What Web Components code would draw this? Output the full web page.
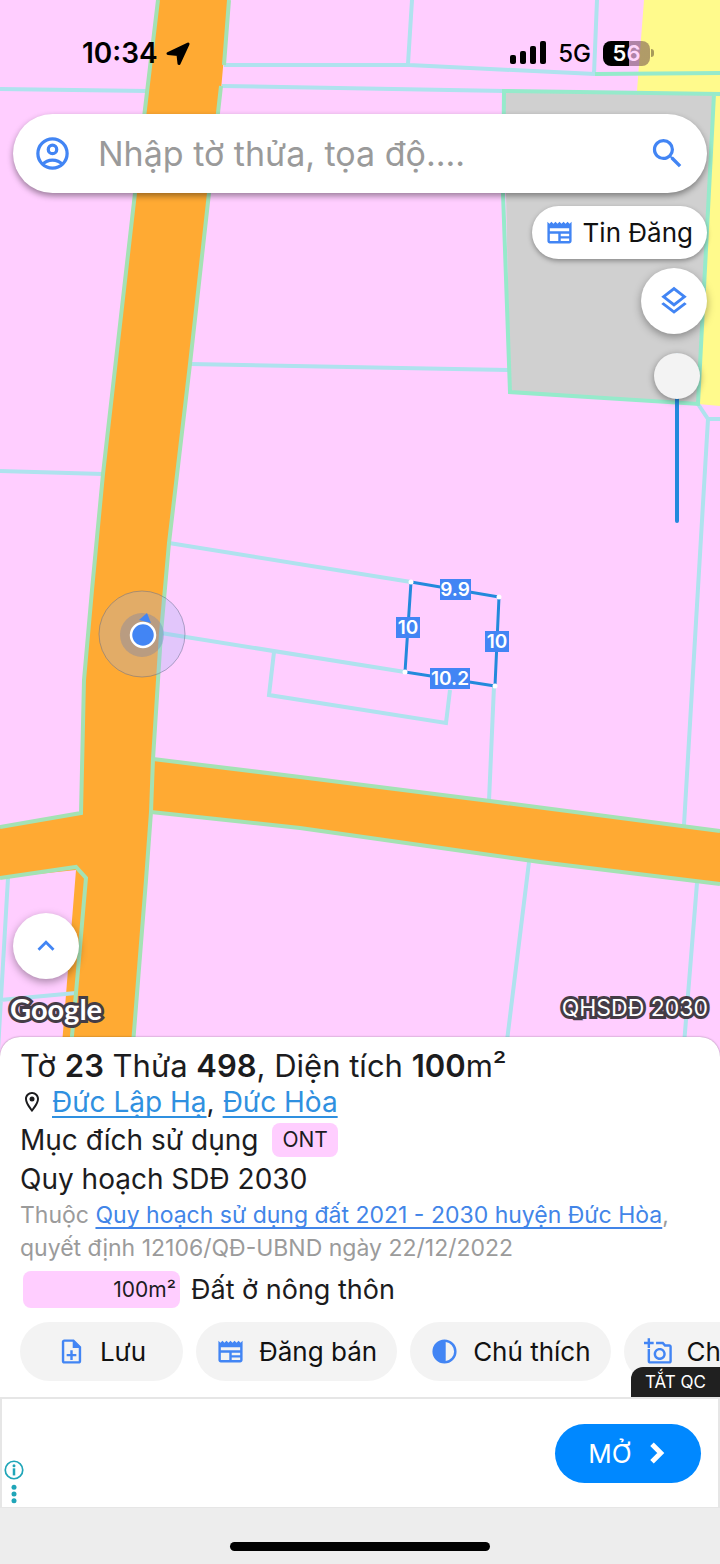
<!DOCTYPE html>
<html lang="vi">
<head>
<meta charset="utf-8">
<meta name="viewport" content="width=device-width, initial-scale=1">
<title>Bản đồ quy hoạch</title>
<style>
    body {
        margin: 0;
        font-family: Inter, "Liberation Sans", sans-serif;
        color: #1c1c1e;
        background: #ededed;
    }
</style>
</head>
<body>
<land-app></land-app>

<script>
const icons = {
    account: '<g fill="none" stroke="currentColor" stroke-width="2"><circle cx="12" cy="12" r="9"/><circle cx="12" cy="9.500" r="2.600"/><path d="M6 18.600C9 15.200 15 15.200 18 18.600"/></g>',
    search: '<path d="M15.500 14h-.79l-.28-.27A6.470 6.470 0 0 0 16 9.500 6.500 6.500 0 1 0 9.500 16c1.610 0 3.090-.59 4.230-1.570l.27.28v.79l5 4.990L20.490 19l-4.990-5zm-6 0C7.010 14 5 11.990 5 9.500S7.010 5 9.500 5 14 7.010 14 9.500 11.990 14 9.500 14z"/>',
    news: '<path fill-rule="evenodd" d="M22 3l-1.670 1.670L18.670 3 17 4.670 15.330 3l-1.660 1.670L12 3l-1.670 1.670L8.670 3 7 4.670 5.330 3 3.670 4.670 2 3v16c0 1.100.9 2 2 2h16c1.100 0 2-.9 2-2V3zM11 19H4v-6h7v6zm9 0h-7v-2h7v2zm0-4h-7v-2h7v2zm0-4H4V8.500h16V11z"/>',
    layers: '<path d="M11.990 18.540l-7.370-5.730L3 14.070l9 7 9-7-1.630-1.270-7.380 5.740zM12 16l7.360-5.730L21 9l-9-7-9 7 1.630 1.270L12 16zm0-11.470L17.740 9 12 13.470 6.260 9 12 4.530z"/>',
    up: '<path d="M12 8l-6 6 1.410 1.410L12 10.830l4.590 4.580L18 14z"/>',
    pin: '<path d="M12 2C8.130 2 5 5.130 5 9c0 5.250 7 13 7 13s7-7.750 7-13c0-3.870-3.130-7-7-7zM7 9c0-2.760 2.240-5 5-5s5 2.240 5 5c0 2.880-2.880 7.190-5 9.880C9.920 16.210 7 11.850 7 9z"/><circle cx="12" cy="9" r="2.500"/>',
    save: '<path d="M13 11h-2v3H8v2h3v3h2v-3h3v-2h-3zm1-9H6c-1.100 0-2 .9-2 2v16c0 1.100.89 2 1.990 2H18c1.100 0 2-.9 2-2V8l-6-6zm4 18H6V4h7v5h5v11z"/>',
    contrast: '<path d="M12 2a10 10 0 1 0 0 20 10 10 0 0 0 0-20zm1 2.070a8 8 0 0 1 0 15.860V4.070z"/>',
    camera: '<path d="M21 6h-3.170L16 4h-6v2h5.120l1.830 2H21v12H5v-10H3v10c0 1.100.9 2 2 2h16c1.100 0 2-.9 2-2V8c0-1.100-.9-2-2-2zM8 14c0 2.760 2.240 5 5 5s5-2.240 5-5-2.240-5-5-5-5 2.240-5 5zm5-3c1.650 0 3 1.350 3 3s-1.350 3-3 3-3-1.350-3-3 1.350-3 3-3zM5 6h3V4H5V1H3v3H0v2h3v3h2z"/>',
    next: '<path d="M8 5l7 7-7 7" fill="none" stroke="currentColor" stroke-width="4"/>',
    info: '<circle cx="12" cy="12" r="10.500" fill="none" stroke="currentColor" stroke-width="2"/><path d="M10.500 10h3v8.500h-3z"/><circle cx="12" cy="6.800" r="1.800"/>',
    more: '<circle cx="12" cy="4" r="3"/><circle cx="12" cy="12" r="3"/><circle cx="12" cy="20" r="3"/>'
};

class UiIcon extends HTMLElement {
    constructor() {
        super();
        this.attachShadow({ mode: 'open' });
        this.shadowRoot.innerHTML = `
            <style>
                :host { display: inline-block; width: 28px; height: 28px; flex: none; color: #4285f4; }
                svg { display: block; width: 100%; height: 100%; fill: currentColor; }
            </style>
            <svg viewBox="0 0 24 24" aria-hidden="true">${icons[this.getAttribute('name')] || ''}</svg>
        `;
    }
}

class StatusBar extends HTMLElement {
    constructor() {
        super();
        this.attachShadow({ mode: 'open' });
        this.shadowRoot.innerHTML = `
            <style>
                :host {
                    display: flex;
                    justify-content: space-between;
                    align-items: center;
                    height: 106px;
                    margin-bottom: 8px;
                    padding: 0 70px 0 82px;
                    color: #000;
                }
                div { display: flex; align-items: center; }
                .time { font-size: 28px; font-weight: 600; gap: 8px; }
                .signal { gap: 12px; font-size: 24px; font-weight: 500; }
                .battery {
                    position: relative;
                    justify-content: center;
                    width: 47px;
                    height: 25px;
                    border-radius: 8px;
                    background: linear-gradient(to right, #000 56%, rgba(80, 40, 60, .45) 56%);
                    color: #fff;
                    font-size: 22px;
                    font-weight: 600;
                }
                .battery::after {
                    content: "";
                    position: absolute;
                    left: 48px;
                    width: 3px;
                    height: 8px;
                    border-radius: 0 3px 3px 0;
                    background: rgba(80, 60, 40, .5);
                }
                .battery span { color: #ffd6fb; }
            </style>
            <div class="time">10:34
                <svg width="24" height="24" viewBox="0 0 24 24"><path d="M22 3L13 22.500 12 13.500 2 12.500Z" stroke="#000" stroke-width="3" stroke-linejoin="round"/></svg>
            </div>
            <div class="signal">
                <svg width="36" height="24" viewBox="0 0 36 24"><rect y="14" width="6" height="9" rx="2"/><rect x="10" y="10" width="6" height="13" rx="2"/><rect x="20" y="5" width="6" height="18" rx="2"/><rect x="30" width="6" height="23" rx="2"/></svg>
                5G
                <div class="battery">5<span>6</span></div>
            </div>
        `;
    }
}

class SearchBar extends HTMLElement {
    constructor() {
        super();
        this.attachShadow({ mode: 'open' });
        this.shadowRoot.innerHTML = `
            <style>
                :host { display: block; margin: 0 13px; }
                form {
                    display: flex;
                    align-items: center;
                    height: 79px;
                    padding: 0 20px;
                    border-radius: 40px;
                    background: #fff;
                    box-shadow: 0 3px 6px rgba(0, 0, 0, .4);
                }
                button { display: flex; padding: 0; border: none; background: none; }
                ui-icon { width: 39px; height: 39px; }
                input {
                    flex: 1;
                    min-width: 0;
                    margin: 0 26px;
                    padding: 0;
                    border: none;
                    outline: none;
                    background: none;
                    font: 34px Inter, "Liberation Sans", sans-serif;
                }
                input::placeholder { color: #9a9a9a; opacity: 1; }
            </style>
            <form>
                <button type="button" aria-label="Tài khoản"><ui-icon name="account"></ui-icon></button>
                <input type="text" aria-label="Tìm kiếm" placeholder="Nhập tờ thửa, tọa độ....">
                <button type="button" aria-label="Tìm"><ui-icon name="search"></ui-icon></button>
            </form>
        `;
    }
}

class RoundButton extends HTMLElement {
    constructor() {
        super();
        this.attachShadow({ mode: 'open' });
        this.shadowRoot.innerHTML = `
            <style>
                :host { display: block; }
                button {
                    display: flex;
                    align-items: center;
                    justify-content: center;
                    width: 66px;
                    height: 66px;
                    padding: 0;
                    border: none;
                    border-radius: 50%;
                    background: #fff;
                    box-shadow: 0 3px 8px rgba(0, 0, 0, .35);
                }
                ui-icon { width: 34px; height: 34px; }
            </style>
            <button type="button" aria-label="${this.getAttribute('label')}">
                <ui-icon name="${this.getAttribute('icon')}"></ui-icon>
            </button>
        `;
    }
}

class PillButton extends HTMLElement {
    constructor() {
        super();
        this.attachShadow({ mode: 'open' });
        this.shadowRoot.innerHTML = `
            <style>
                :host { display: block; flex: none; }
                button {
                    display: flex;
                    align-items: center;
                    justify-content: center;
                    gap: 14px;
                    min-width: 163px;
                    height: 59px;
                    padding: 0 20px;
                    border: none;
                    border-radius: 30px;
                    background: #f3f3f3;
                    color: #111;
                    font: 26px Inter, "Liberation Sans", sans-serif;
                    white-space: nowrap;
                }
                :host([raised]) button {
                    gap: 9px;
                    height: 53px;
                    padding: 0 14px 0 13px;
                    background: #fff;
                    box-shadow: 0 2px 5px rgba(0, 0, 0, .35);
                }
                ui-icon { width: 29px; height: 29px; }
            </style>
            <button type="button"><ui-icon name="${this.getAttribute('icon')}"></ui-icon><slot></slot></button>
        `;
    }
}

class ParcelMap extends HTMLElement {
    constructor() {
        super();
        this.attachShadow({ mode: 'open' });
        this.shadowRoot.innerHTML = `
            <style>
                :host { display: block; overflow: hidden; background: #ffceff; }
                svg { display: block; width: 100%; height: 100%; }
                .road { fill: #ffaa33; }
                .lines { fill: none; stroke: #afe2ee; stroke-width: 4; }
                .edges { fill: none; stroke: #a4e2b4; stroke-width: 4; }
                .parcel { fill: none; stroke: #2389dc; stroke-width: 3; }
                .tags rect { fill: #4285f4; }
                .tags text { fill: #fff; font-size: 19px; font-weight: 600; text-anchor: middle; }
            </style>
            <svg viewBox="0 0 720 1057" preserveAspectRatio="xMidYMin slice">
                <path fill="#fffa8c" d="M644 0H720V406L698 404 714 94 637 91z"/>
                <path fill="#d0d0d0" d="M504 92L714 94 698 405 510 392z"/>

                <path class="road" d="M158 0H229L221 90 209 193 190 364 169 543 161 633 153 759 300 777 490 801 720 831V884L540 862 300 828 151 812 146 880 132 1057H61L76 870 0 878V826L81 813 84 680 92 590 103 474 135 193z"/>

                <g class="lines">
                    <path d="M0 89L147 91M224 65H409L595 74M412 0L408 64M597 0L594 74M222 86L505 91"/>
                    <path d="M190 364L508 370M0 471L103 474M169 543L411 582M161 633L405 672"/>
                    <path d="M274 652L269 695 446 723 450 690M494 686L489 801"/>
                    <path d="M698 404L708 419H720M708 419L684 825"/>
                    <path d="M529 862L505 1057M697 883L683 1057M8 878L-2 1050M0 1000L76 993"/>
                </g>
                <g class="edges">
                    <path d="M158 0L135 193 103 474 92 590 84 680 81 813 0 827"/>
                    <path d="M229 0L224 65M221 86L209 193 190 364 169 543 161 633 153 759 151 812 146 880 132 1057"/>
                    <path d="M153 759L300 777 490 801 720 831M151 812L300 828 540 862 720 884"/>
                    <path d="M0 878L76 867 86 878 76 993 70 1057"/>
                    <path d="M595 74L720 73M720 94L504 91 503 193 510 392 698 404 714 94" stroke="#96eacb"/>
                </g>

                <path class="parcel" d="M411 582L499 597 495 686 405 672z"/>
                <g fill="#fff"><circle cx="411" cy="582" r="2.500"/><circle cx="499" cy="597" r="2.500"/><circle cx="495" cy="686" r="2.500"/><circle cx="405" cy="672" r="2.500"/></g>
                <g class="tags">
                    <rect x="440" y="579" width="31" height="21"/><text x="455" y="596">9.9</text>
                    <rect x="396" y="617" width="24" height="21"/><text x="408" y="634">10</text>
                    <rect x="485" y="631" width="24" height="21"/><text x="497" y="648">10</text>
                    <rect x="430" y="668" width="40" height="21"/><text x="450" y="685">10.2</text>
                </g>

                <circle cx="142" cy="634" r="43" fill="rgba(150,180,240,.28)" stroke="rgba(100,110,140,.5)"/>
                <circle cx="142" cy="635" r="22" fill="rgba(90,120,190,.3)"/>
                <path fill="#4285f4" d="M147 613L151 623 139 620z"/>
                <circle cx="143" cy="635" r="12" fill="#4285f4" stroke="#fff" stroke-width="2.500"/>
            </svg>
        `;
    }
}

class MapScreen extends HTMLElement {
    constructor() {
        super();
        this.attachShadow({ mode: 'open' });
        this.shadowRoot.innerHTML = `
            <style>
                :host { display: grid; min-height: 1057px; }
                parcel-map, .overlay { grid-area: 1 / 1; min-width: 0; }
                .overlay { position: relative; display: flex; flex-direction: column; }
                .tools {
                    display: flex;
                    flex-direction: column;
                    align-items: flex-end;
                    gap: 9px;
                    padding: 13px 13px 0;
                }
                input {
                    appearance: none;
                    writing-mode: vertical-lr;
                    width: 46px;
                    height: 170px;
                    margin: 10px 7px 0 0;
                    background: none;
                }
                input::-webkit-slider-runnable-track {
                    width: 4px;
                    background: #2389dc;
                    border-radius: 2px;
                }
                input::-webkit-slider-thumb {
                    appearance: none;
                    width: 46px;
                    height: 46px;
                    margin-left: -21px;
                    border-radius: 50%;
                    background: #f3f3f3;
                    box-shadow: 0 2px 7px rgba(0, 0, 0, .4);
                }
                .bottom { margin-top: auto; padding: 0 12px 33px 13px; }
                .labels {
                    display: flex;
                    justify-content: space-between;
                    align-items: center;
                    height: 32px;
                    margin-top: 13px;
                    color: #fff;
                    font-size: 23px;
                    -webkit-text-stroke: 6px #443c46;
                    paint-order: stroke fill;
                }
                .google { margin-left: -3px; font: 700 29px Lato, sans-serif; }
            </style>
            <parcel-map></parcel-map>
            <div class="overlay">
                <status-bar></status-bar>
                <search-bar></search-bar>
                <div class="tools">
                    <pill-button icon="news" raised>Tin Đăng</pill-button>
                    <round-button icon="layers" label="Lớp bản đồ"></round-button>
                    <input type="range" min="0" max="100" value="0" aria-label="Độ mờ">
                </div>
                <div class="bottom">
                    <round-button icon="up" label="Mở rộng"></round-button>
                    <div class="labels"><span class="google">Google</span><span>QHSDĐ 2030</span></div>
                </div>
            </div>
        `;
    }
}

class ParcelSheet extends HTMLElement {
    constructor() {
        super();
        this.attachShadow({ mode: 'open' });
        this.shadowRoot.innerHTML = `
            <style>
                :host {
                    display: block;
                    position: relative;
                    margin-top: -20px;
                    padding: 10px 0 16px 20px;
                    border-radius: 20px 20px 0 0;
                    background: #fff;
                    box-shadow: 0 0 2px rgba(0, 0, 0, .4);
                    overflow: hidden;
                }
                h1, p { margin: 0; font-size: 28px; font-weight: 400; }
                h1 { font-size: 31px; line-height: 38px; }
                b { font-weight: 600; }
                a { color: #2f90e0; text-underline-offset: 4px; text-decoration-thickness: 2px; text-decoration-skip-ink: none; }
                .place { display: flex; align-items: center; line-height: 34px; }
                .place ui-icon { width: 24px; height: 24px; margin-right: 8px; color: #1c1c1e; }
                .place span { margin-right: 8px; }
                .purpose { display: flex; align-items: center; gap: 14px; height: 42px; }
                .tag {
                    padding: 0 10px;
                    border-radius: 8px;
                    background: #ffceff;
                    font-size: 21px;
                    line-height: 34px;
                }
                .plan { line-height: 36px; }
                .note { margin: 2px 20px 6px 0; color: #9b9b9b; font-size: 23px; line-height: 33px; }
                .note a { color: #4285e8; }
                .use { display: flex; align-items: center; gap: 11px; font-size: 27px; }
                .area {
                    width: 153px;
                    margin-left: 3px;
                    padding-right: 4px;
                    border-radius: 8px;
                    background: #ffceff;
                    font-size: 21px;
                    line-height: 37px;
                    text-align: right;
                }
                .actions { display: flex; gap: 13px; margin-top: 14px; overflow: hidden; }
            </style>
            <h1>Tờ <b>23</b> Thửa <b>498</b>, Diện tích <b>100</b>m²</h1>
            <p class="place"><ui-icon name="pin"></ui-icon><a href="#">Đức Lập Hạ</a><span>,</span><a href="#">Đức Hòa</a></p>
            <p class="purpose">Mục đích sử dụng <span class="tag">ONT</span></p>
            <p class="plan">Quy hoạch SDĐ 2030</p>
            <p class="note">Thuộc <a href="#">Quy hoạch sử dụng đất 2021 - 2030 huyện Đức Hòa</a><span>,</span> <span>quyết định 12106/QĐ-UBND ngày 22/12/2022</span></p>
            <div class="use"><span class="area">100m²</span>Đất ở nông thôn</div>
            <div class="actions">
                <pill-button icon="save">Lưu</pill-button>
                <pill-button icon="news">Đăng bán</pill-button>
                <pill-button icon="contrast">Chú thích</pill-button>
                <pill-button icon="camera">Chụp ảnh</pill-button>
            </div>
        `;
        // the second half of the note always starts its own line
        this.shadowRoot.querySelector('.note span:last-child').style.display = 'block';
    }
}

class AdBanner extends HTMLElement {
    constructor() {
        super();
        this.attachShadow({ mode: 'open' });
        this.shadowRoot.innerHTML = `
            <style>
                :host {
                    display: flex;
                    justify-content: space-between;
                    align-items: center;
                    position: relative;
                    box-sizing: border-box;
                    height: 111px;
                    padding: 0 17px 0 2px;
                    border: 2px solid #e6e6e6;
                    border-bottom-width: 1px;
                    background: #fff;
                }
                button { border: none; font: 17px Inter, "Liberation Sans", sans-serif; color: #fff; }
                .off {
                    position: absolute;
                    right: -2px;
                    bottom: 100%;
                    height: 30px;
                    margin-bottom: 2px;
                    padding: 0 14px;
                    border-radius: 12px 0 0 0;
                    background: #202020;
                }
                .open {
                    display: flex;
                    align-items: center;
                    justify-content: center;
                    gap: 10px;
                    width: 146px;
                    height: 59px;
                    border-radius: 30px;
                    background: #0088ff;
                    font-size: 26px;
                }
                .open ui-icon { width: 30px; height: 30px; margin-right: -4px; color: #fff; }
                .marks { display: flex; flex-direction: column; align-items: center; gap: 4px; align-self: flex-end; padding-bottom: 3px; }
                .marks button { display: flex; padding: 0; background: none; }
                .marks ui-icon { width: 20px; height: 20px; color: #1fa5b8; }
            </style>
            <button class="off" type="button">TẮT QC</button>
            <div class="marks">
                <button type="button" aria-label="Thông tin quảng cáo"><ui-icon name="info"></ui-icon></button>
                <button type="button" aria-label="Tùy chọn"><ui-icon name="more"></ui-icon></button>
            </div>
            <button class="open" type="button">MỞ <ui-icon name="next"></ui-icon></button>
        `;
    }
}

class LandApp extends HTMLElement {
    constructor() {
        super();
        this.attachShadow({ mode: 'open' });
        this.shadowRoot.innerHTML = `
            <style>
                :host { display: flex; flex-direction: column; min-height: 100vh; }
                map-screen { flex: 1; }
                .home { display: flex; justify-content: center; align-items: flex-end; height: 43px; padding-bottom: 13px; }
                .home::before { content: ""; width: 36%; height: 9px; border-radius: 5px; background: #000; }
            </style>
            <map-screen></map-screen>
            <parcel-sheet></parcel-sheet>
            <ad-banner></ad-banner>
            <div class="home"></div>
        `;
    }
}

customElements.define('ui-icon', UiIcon);
customElements.define('status-bar', StatusBar);
customElements.define('search-bar', SearchBar);
customElements.define('round-button', RoundButton);
customElements.define('pill-button', PillButton);
customElements.define('parcel-map', ParcelMap);
customElements.define('map-screen', MapScreen);
customElements.define('parcel-sheet', ParcelSheet);
customElements.define('ad-banner', AdBanner);
customElements.define('land-app', LandApp);
</script>
</body>
</html>
